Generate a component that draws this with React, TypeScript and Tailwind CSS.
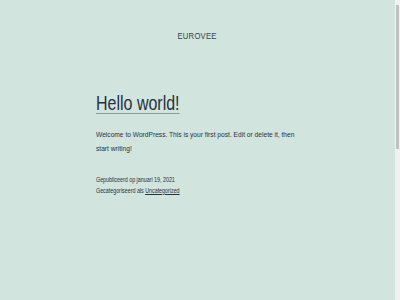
import React from 'react';

const font = { fontFamily: '"Liberation Sans Narrow", "Liberation Sans", Arial, sans-serif' };

export default function App() {
  return (
    <div className="w-[400px] h-[300px] flex overflow-hidden text-[#28303d]" style={font}>
      <main className="flex-1 bg-[#d1e4dd] flex flex-col">
        <header className="pt-[30px] flex justify-center">
          <p className="text-[9px] leading-[12px] tracking-[0.3px] text-[#39414d] uppercase scale-x-[0.85] origin-center">
            Eurovee
          </p>
        </header>

        <article className="pl-[96px] pt-[48px]">
          <div className="w-[252px] origin-left scale-x-[0.82]">
            <h1 className="text-[19.5px] leading-[26px] text-[#28303d]">
              <span className="underline decoration-[1px] underline-offset-[3px] decoration-[#8a9a98]">Hello world!</span>
            </h1>
            <div className="mt-[12px] text-[8.1px] leading-[14px]">
              <p>Welcome to WordPress. This is your first post. Edit or delete it, then start writing!</p>
            </div>
            <footer className="mt-[19px] text-[6.5px] leading-[10.5px]">
              <p>Gepubliceerd op januari 19, 2021</p>
              <p>
                Gecategoriseerd als <span className="underline underline-offset-[1px]">Uncategorized</span>
              </p>
            </footer>
          </div>
        </article>
      </main>

      <div className="w-[5px] bg-[#f1f1f1] flex flex-col items-center py-[5px]">
        <div className="w-[3px] h-[144px] bg-[#c1c1c1]" />
      </div>
    </div>
  );
}
